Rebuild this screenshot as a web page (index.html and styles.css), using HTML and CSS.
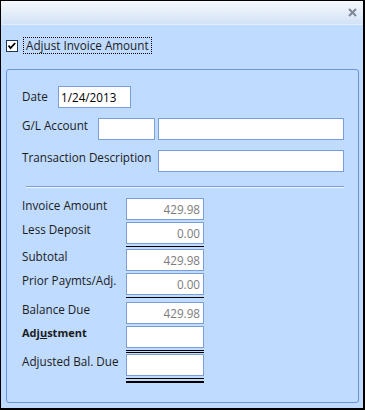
FILE: index.html
```html
<!DOCTYPE html>
<html lang="en">
<head>
    <meta charset="UTF-8">
    <title>Adjust Invoice Amount</title>
    <link rel="stylesheet" href="styles.css">
</head>
<body>
    <div class="window">
        <div class="titlebar">
            <svg class="close" width="9" height="9" viewBox="0 0 9 9">
                <path d="M1 1 L8 8 M8 1 L1 8" stroke="#7f8894" stroke-width="2" fill="none"/>
            </svg>
        </div>

        <div class="content">
            <div class="check-row">
                <span class="checkbox">
                    <svg width="10" height="10" viewBox="0 0 10 10">
                        <polyline points="1.5,4.5 3.5,7.2 8.2,2" stroke="#000" stroke-width="1.8" fill="none"/>
                    </svg>
                </span>
                <span class="focus">Adjust Invoice Amount</span>
            </div>

            <div class="group">
                <div class="row">
                    <label class="lbl lbl-date">Date</label>
                    <div class="field w-date">1/24/2013</div>
                </div>
                <div class="row">
                    <label class="lbl lbl-gl">G/L Account</label>
                    <div class="field w-gl"></div>
                    <div class="field w-wide"></div>
                </div>
                <div class="row">
                    <label class="lbl lbl-desc">Transaction Description</label>
                    <div class="field w-wide"></div>
                </div>

                <div class="separator"></div>

                <div class="money">
                    <div class="mrow">
                        <label class="lbl lbl-money">Invoice Amount</label>
                        <div class="field num">429.98</div>
                    </div>
                    <div class="mrow">
                        <label class="lbl lbl-money">Less Deposit</label>
                        <div class="field num">0.00</div>
                    </div>
                    <div class="rule"></div>
                    <div class="mrow">
                        <label class="lbl lbl-money">Subtotal</label>
                        <div class="field num">429.98</div>
                    </div>
                    <div class="mrow">
                        <label class="lbl lbl-money">Prior Paymts/Adj.</label>
                        <div class="field num">0.00</div>
                    </div>
                    <div class="rule rule-gap"></div>
                    <div class="mrow">
                        <label class="lbl lbl-money">Balance Due</label>
                        <div class="field num">429.98</div>
                    </div>
                    <div class="mrow">
                        <label class="lbl lbl-money bold">Adj<u>u</u>stment</label>
                        <div class="field num"></div>
                    </div>
                    <div class="rule rule-double"></div>
                    <div class="mrow">
                        <label class="lbl lbl-money">Adjusted Bal. Due</label>
                        <div class="field num"></div>
                    </div>
                    <div class="rule rule-total"></div>
                </div>
            </div>
        </div>
    </div>
</body>
</html>
```

FILE: styles.css
```css
body {
    margin: 0;
    background-color: #fff;
    font-family: "Open Sans", "Liberation Sans", sans-serif;
    font-size: 11.7px;
    color: #1c1c1c;
}
.window {
    width: 365px;
    height: 410px;
    box-sizing: border-box;
    border: 1px solid #000;
    border-right-width: 2px;
    border-bottom-width: 2px;
    background-color: #bfdbff;
    display: flex;
    flex-direction: column;
}
.titlebar {
    height: 23px;
    flex: none;
    background: linear-gradient(#f6f9fd, #d3e2f6);
    border-bottom: 1px solid #e4eefb;
    display: flex;
    align-items: center;
    justify-content: flex-end;
    padding-right: 6px;
}
.content {
    flex: 1;
    display: flex;
    flex-direction: column;
    padding: 12px 4px 5px 5px;
}
.check-row {
    display: flex;
    align-items: center;
    height: 17px;
}
.checkbox {
    width: 10px;
    height: 10px;
    border: 1px solid #1f3555;
    background-color: #fff;
    display: flex;
}
.focus {
    margin-left: 5px;
    border: 1px dotted #000;
    line-height: 15px;
    padding: 0 2px;
}
.group {
    flex: 1;
    margin-top: 15px;
    border: 1px solid #6a96d6;
    border-radius: 3px;
    padding: 16px 15px 0;
}
.row {
    display: flex;
    align-items: flex-start;
    height: 22px;
    margin-bottom: 10px;
}
.lbl {
    line-height: 14px;
    flex: none;
}
.lbl-date {
    width: 36px;
    padding-top: 3px;
}
.lbl-gl {
    width: 76px;
}
.lbl-desc {
    width: 136px;
}
.lbl-money {
    width: 104px;
}
.bold {
    font-weight: bold;
    font-size: 11px;
}
.field {
    height: 22px;
    box-sizing: border-box;
    border: 1px solid #7a9ed8;
    background-color: #fff;
    line-height: 20px;
    padding: 0 2px;
    flex: none;
}
.w-date {
    width: 73px;
    color: #000;
}
.w-gl {
    width: 57px;
    margin-right: 3px;
}
.w-wide {
    width: 186px;
}
.separator {
    margin: 14px 0 10px 4px;
    width: 318px;
    border-top: 1px solid #7a9ed8;
    border-bottom: 1px solid #eef5ff;
}
.mrow {
    display: flex;
    align-items: flex-start;
    margin-bottom: 2px;
}
.num {
    width: 78px;
    text-align: right;
    padding-right: 3px;
    color: #7c7c7c;
}
.rule {
    margin: 0 0 2px 104px;
    width: 78px;
    height: 1px;
    background-color: #000;
}
.rule-gap {
    margin-bottom: 4px;
}
.rule-double {
    height: 1px;
    background-color: transparent;
    border-top: 1px solid #000;
    border-bottom: 1px solid #000;
    margin-bottom: 1px;
}
.rule-total {
    height: 2px;
    background-color: transparent;
    border-top: 1px solid #000;
    border-bottom: 2px solid #000;
}
```
